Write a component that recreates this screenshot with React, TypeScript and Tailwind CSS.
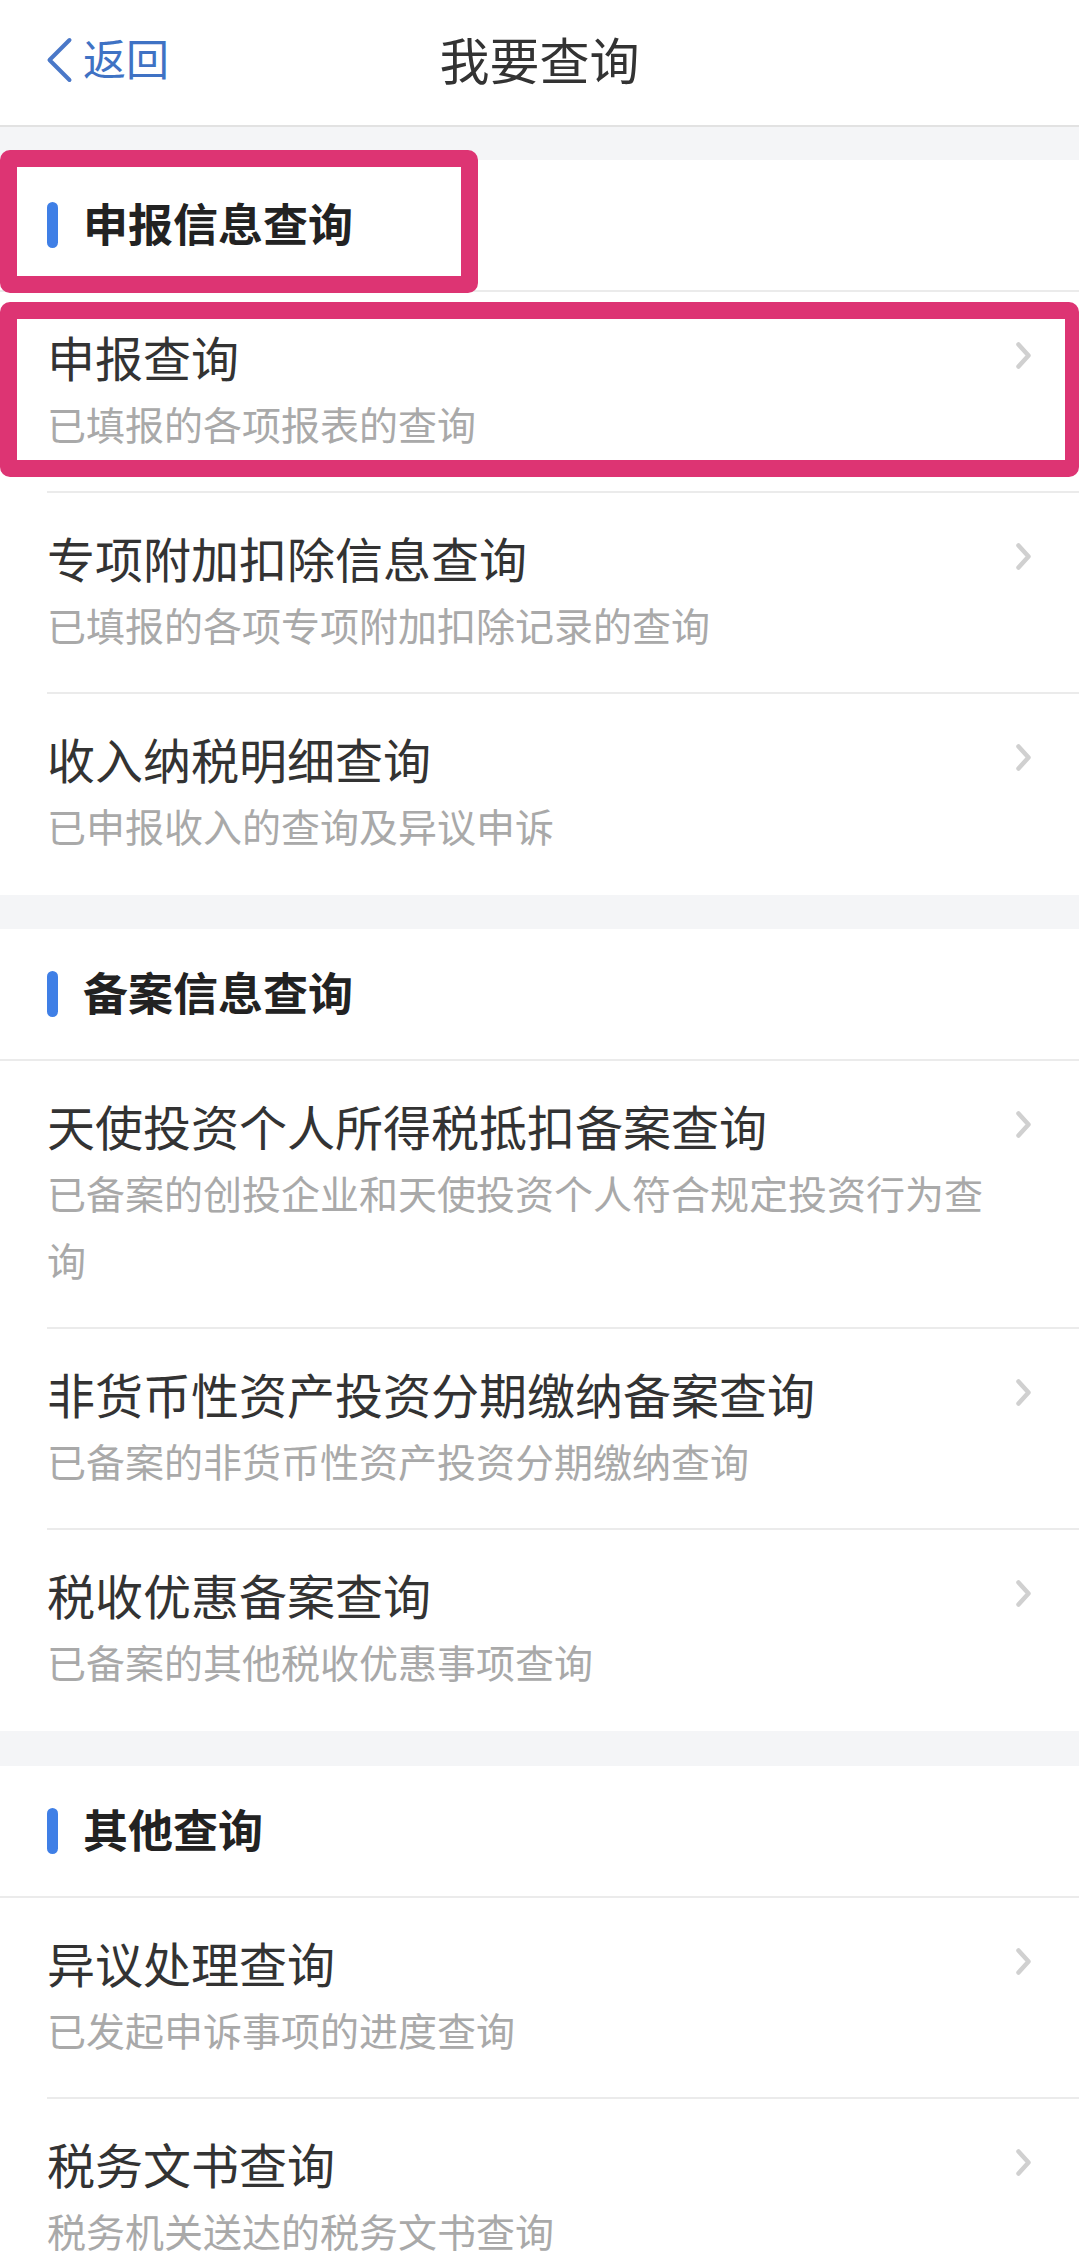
import React from "react";

type Item = { title: string; sub: string };
type Section = { name: string; items: Item[] };

const sections: Section[] = [
  {
    name: "申报信息查询",
    items: [
      { title: "申报查询", sub: "已填报的各项报表的查询" },
      { title: "专项附加扣除信息查询", sub: "已填报的各项专项附加扣除记录的查询" },
      { title: "收入纳税明细查询", sub: "已申报收入的查询及异议申诉" },
    ],
  },
  {
    name: "备案信息查询",
    items: [
      { title: "天使投资个人所得税抵扣备案查询", sub: "已备案的创投企业和天使投资个人符合规定投资行为查询" },
      { title: "非货币性资产投资分期缴纳备案查询", sub: "已备案的非货币性资产投资分期缴纳查询" },
      { title: "税收优惠备案查询", sub: "已备案的其他税收优惠事项查询" },
    ],
  },
  {
    name: "其他查询",
    items: [
      { title: "异议处理查询", sub: "已发起申诉事项的进度查询" },
      { title: "税务文书查询", sub: "税务机关送达的税务文书查询" },
    ],
  },
];

function Chevron() {
  return (
    <svg width="17" height="29" viewBox="0 0 17 29" className="mt-[49px] shrink-0">
      <path d="M3.5 3.5 L13.5 14.5 L3.5 25.5" fill="none" stroke="#d0d0d0" strokeWidth="4.5" strokeLinecap="round" strokeLinejoin="round" />
    </svg>
  );
}

function Row({ item, last }: { item: Item; last: boolean }) {
  return (
    <div className="pl-[47px] bg-white">
      <div className={"flex pr-[47px] border-b-2 " + (last ? "border-transparent" : "border-[#ebebeb]")}>
        <div className="flex-1 min-w-0 pt-[32px] pb-[34px] pr-[10px]">
          <div className="text-[48px] leading-[64px] text-[#333333]">{item.title}</div>
          <div className="mt-[2px] text-[39px] leading-[67px] text-[#a9a9a9]">{item.sub}</div>
        </div>
        <Chevron />
      </div>
    </div>
  );
}

function SectionBlock({ s, gap }: { s: Section; gap: string }) {
  return (
    <div className={gap}>
      <div className="h-[132px] bg-white flex items-center border-b-2 border-[#ebebeb]">
        <div className="ml-[47px] w-[11px] h-[46px] rounded-full bg-[#3f7fe6]" />
        <div className="ml-[25px] mb-[6px] text-[45px] leading-none font-bold text-[#222222]">{s.name}</div>
      </div>
      {s.items.map((it, i) => (
        <Row key={it.title} item={it} last={i === s.items.length - 1} />
      ))}
    </div>
  );
}

export default function App() {
  return (
    <div
      className="relative w-[1079px] h-[2264px] overflow-hidden bg-[#f4f5f7]"
      style={{ fontFamily: "'Noto Sans CJK SC', 'Noto Sans', sans-serif" }}
    >
      <div className="h-[127px] bg-white border-b-2 border-[#e2e2e2] grid grid-cols-[1fr_auto_1fr] items-center pb-[10px]">
        <div className="flex items-center pl-[45px]">
          <svg width="28" height="46" viewBox="0 0 28 46" className="mt-[4px]">
            <path d="M24.5 3 L4.5 23 L24.5 43" fill="none" stroke="#4a78c8" strokeWidth="4" strokeLinecap="round" strokeLinejoin="round" />
          </svg>
          <span className="ml-[10px] text-[43px] leading-none text-[#3f72c4]">返回</span>
        </div>
        <div className="text-[50px] leading-none text-[#333333]">我要查询</div>
        <div />
      </div>

      <SectionBlock s={sections[0]} gap="mt-[33px]" />
      <SectionBlock s={sections[1]} gap="mt-[34px]" />
      <SectionBlock s={sections[2]} gap="mt-[35px]" />

      <div className="absolute left-0 top-[150px] w-[478px] h-[143px] border-[17px] border-[#dd3473] rounded-[10px]" />
      <div className="absolute left-0 top-[302px] w-[1079px] h-[175px] border-[17px] border-r-[14px] border-[#dd3473] rounded-[10px]" />
    </div>
  );
}
